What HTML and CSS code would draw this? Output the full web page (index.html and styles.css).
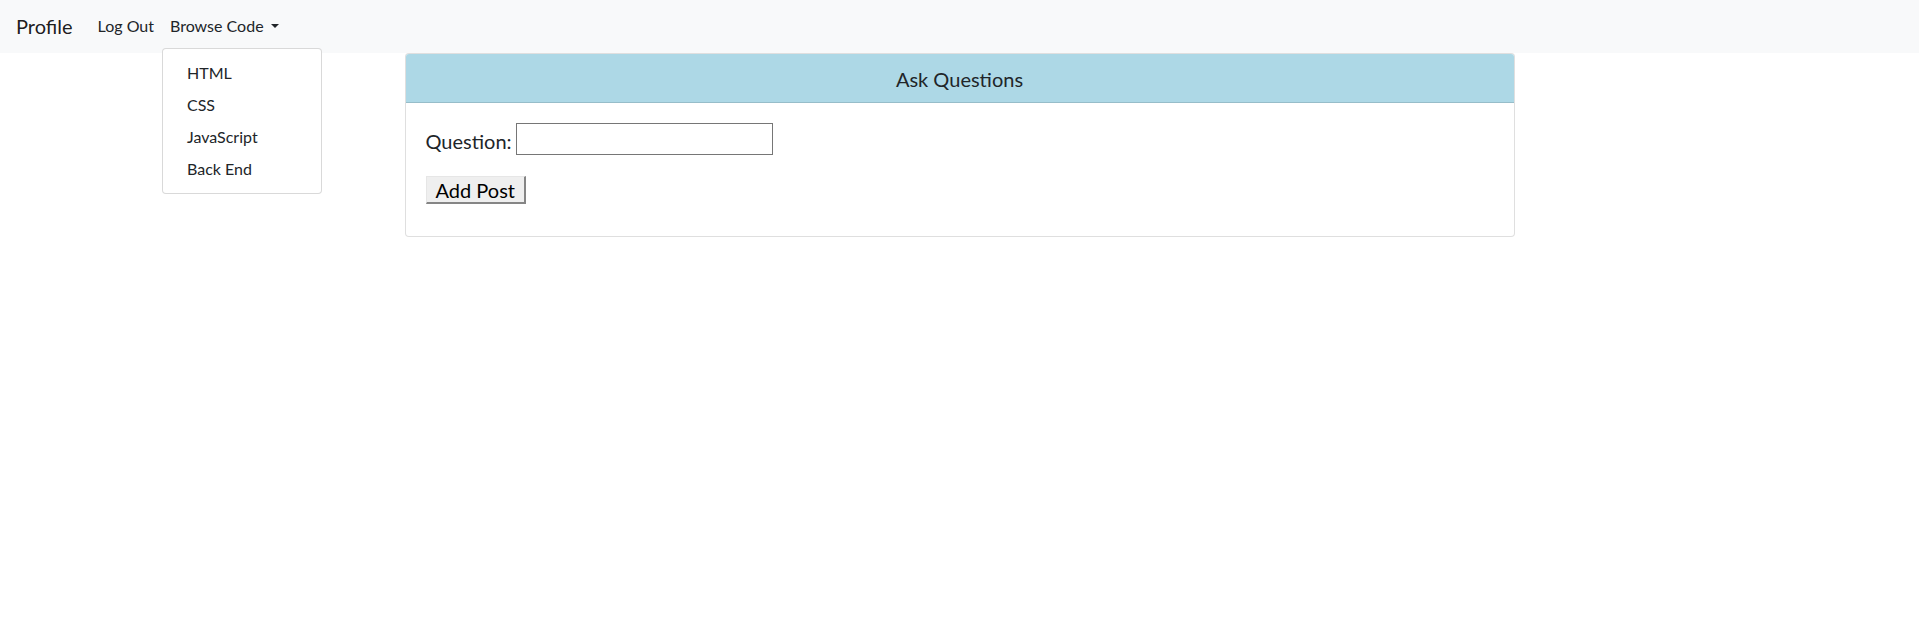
FILE: index.html
```html
<!DOCTYPE html>
<html lang="en">
<head>
<meta charset="utf-8">
<title>Ask Questions</title>
<link rel="stylesheet" href="styles.css">
</head>
<body>
<nav class="navbar">
  <a class="brand" href="#">Profile</a>
  <ul class="nav">
    <li class="nav-item"><a class="nav-link" href="#">Log Out</a></li>
    <li class="nav-item dropdown">
      <a class="nav-link dropdown-toggle" href="#">Browse Code</a>
      <div class="dropdown-menu">
        <a class="dropdown-item" href="#">HTML</a>
        <a class="dropdown-item" href="#">CSS</a>
        <a class="dropdown-item" href="#">JavaScript</a>
        <a class="dropdown-item" href="#">Back End</a>
      </div>
    </li>
  </ul>
</nav>
<main class="container">
  <section class="card">
    <header class="card-header">Ask Questions</header>
    <div class="card-body">
      <form class="ask-form">
        <div class="field">
          <label class="field-label" for="q">Question:</label>
          <input class="field-input" id="q" type="text">
        </div>
        <button class="submit" type="button">Add Post</button>
      </form>
    </div>
  </section>
</main>
</body>
</html>
```
FILE: styles.css
```css
* { box-sizing: border-box; }
html, body { margin: 0; padding: 0; }
body {
  font-family: Lato, "Liberation Sans", sans-serif;
  font-size: 16px;
  line-height: 1.5;
  color: #212529;
  background: #fff;
}
a { text-decoration: none; color: inherit; }

.navbar {
  display: flex;
  align-items: center;
  height: 53px;
  padding: 0 16px 2px;
  background: #f8f9fa;
}
.brand {
  font-size: 20px;
  line-height: 30px;
  margin-right: 17px;
  color: rgba(0, 0, 0, 0.9);
}
.nav {
  display: flex;
  list-style: none;
  margin: 0;
  padding: 0;
}
.nav-item { position: relative; }
.nav-link {
  display: block;
  padding: 8px;
  line-height: 24px;
  color: #212529;
}
.dropdown-toggle::after {
  content: "";
  display: inline-block;
  margin-left: 7px;
  vertical-align: 4px;
  border-top: 4px solid #212529;
  border-left: 4px solid transparent;
  border-right: 4px solid transparent;
}
.dropdown-menu {
  position: absolute;
  top: 100%;
  left: 0;
  margin-top: 2px;
  min-width: 160px;
  padding: 8px 0;
  background: #fff;
  border: 1px solid rgba(0, 0, 0, 0.15);
  border-radius: 4px;
  z-index: 10;
}
.dropdown-item {
  display: block;
  padding: 4px 24px;
  line-height: 24px;
  color: #212529;
  white-space: nowrap;
}

.container {
  width: 1140px;
  margin: 0 auto;
  padding: 0 15px;
}
.card {
  border: 1px solid rgba(0, 0, 0, 0.125);
  border-radius: 4px;
  background: #fff;
  overflow: hidden;
}
.card-header {
  background: #add8e6;
  border-bottom: 1px solid rgba(0, 0, 0, 0.125);
  padding: 13px 20px 11px;
  font-size: 20px;
  line-height: 24px;
  text-align: center;
  color: #212529;
}
.card-body { padding: 20px; }
.ask-form {
  display: flex;
  flex-direction: column;
  align-items: flex-start;
  gap: 21px;
  margin-bottom: 12px;
}
.field {
  display: flex;
  align-items: flex-start;
  gap: 4px;
  font-size: 20px;
  line-height: 24px;
}
.field-label { margin-top: 6px; }
.field-input {
  width: 257px;
  height: 32px;
  border: 1px solid #767676;
  padding: 1px 2px;
  font: 20px Lato, sans-serif;
  background: #fff;
}
.submit {
  font: 20px/24px Lato, sans-serif;
  color: #000;
  background: #efefef;
  padding: 1px 9px 0;
  border-style: solid;
  border-width: 1px 2px 2px 1px;
  border-color: #e6e6e6 #858585 #858585 #e6e6e6;
  border-radius: 0;
}
```
